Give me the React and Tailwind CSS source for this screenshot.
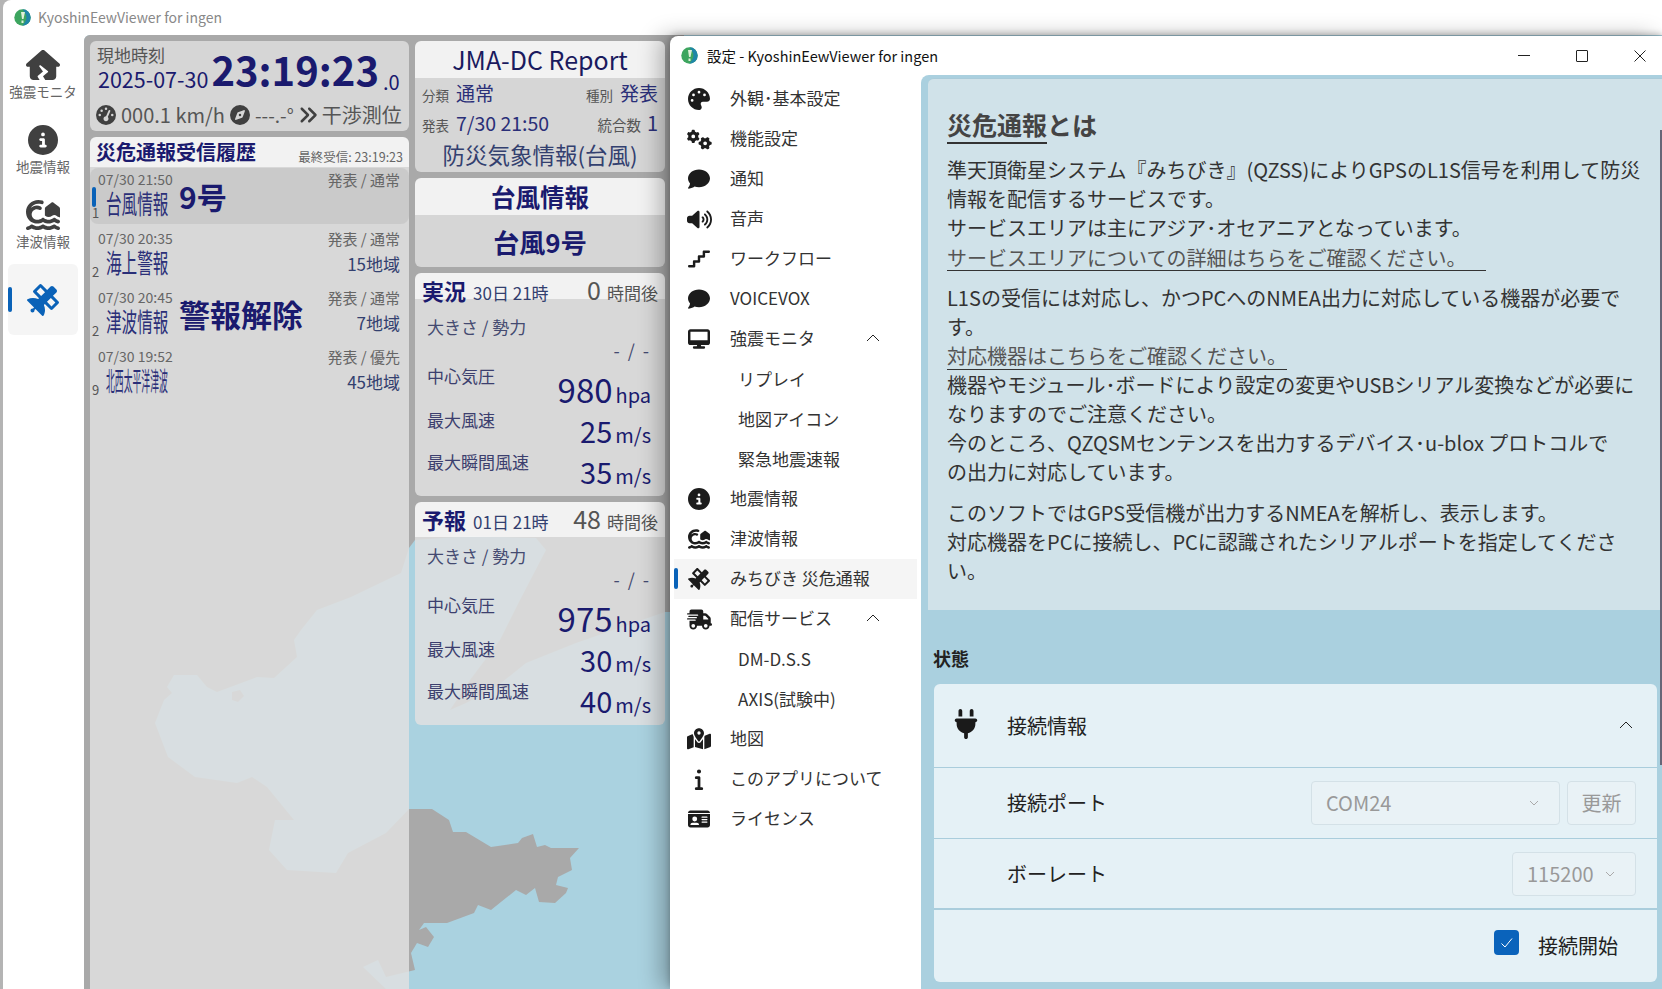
import {
  FaHouseCrack, FaCircleInfo, FaHouseTsunami, FaSatellite, FaGaugeHigh, FaCompass, FaAnglesRight,
  FaPalette, FaGears, FaComment, FaVolumeHigh, FaStairs, FaDesktop, FaTruckFast, FaMapLocationDot,
  FaInfo, FaIdCard, FaPlug,
} from "react-icons/fa6";

function Logo() {
  return (
    <svg width="17" height="17" viewBox="0 0 17 17" className="shrink-0">
      <circle cx="8.5" cy="8.5" r="8.2" fill="#3da55f" />
      <path d="M8.5 .3a8.2 8.2 0 0 1 0 16.4c2-3 5-6 3.5-11z" fill="#1f86a8" />
      <path d="M7 3h4l-1.500 7h-1.500zM7.500 11.500h2v2.500h-2z" fill="#dff0d8" />
    </svg>
  );
}

function Chevron({ className }) {
  return (
    <svg width="14" height="8" viewBox="0 0 14 8" className={className}>
      <path d="M1 7l6-6 6 6" fill="none" stroke="#222" strokeWidth="1" />
    </svg>
  );
}

function ChevronDown() {
  return (
    <svg width="10" height="6" viewBox="0 0 10 6">
      <path d="M1 1l4 4 4-4" fill="none" stroke="#aaa" strokeWidth="1" />
    </svg>
  );
}

function NavItem({ icon: Icon, label, active, size = 34 }) {
  return (
    <div className={`relative h-[71px] mb-[4px] rounded-md flex flex-col items-center ${active ? "bg-[#f5f5f5] mt-[8px] pt-[21px]" : "pt-[15px]"}`}>
      {active && <div className="absolute left-0 top-[23px] h-[25px] w-[4px] rounded-sm bg-[#0a62b8]" />}
      <div className="h-[30px] flex items-center justify-center">
        <Icon style={{ fontSize: size }} className={active ? "text-[#0a62b8]" : "text-[#404040]"} />
      </div>
      {label && <div className="text-[13.5px] leading-[20px] text-[#666] whitespace-nowrap mt-[1px]">{label}</div>}
    </div>
  );
}

function HistoryRow({ date, title, squeeze, count, big, bigSize, state, areas, active }) {
  return (
    <div className={`relative h-[56px] mb-[3px] rounded-lg flex pl-[8px] pr-[9px] pt-[1px] ${active ? "bg-[#c9c9c9]/90" : ""}`}>
      {active && <div className="absolute left-[2px] top-[19px] h-[20px] w-[4px] rounded-sm bg-[#0a62b8]" />}
      <div className="w-[82px] shrink-0">
        <div className="text-[14px] leading-[20px] text-[#666]">{date}</div>
        <div className="flex items-end h-[28px]">
          <span className="w-[13px] -ml-[6px] -mb-[3px] text-[13px] leading-[14px] text-[#555]">{count}</span>
          <span className="w-[62px] whitespace-nowrap ml-[1px] text-[26px] leading-[28px] text-[#2a2f78] origin-left inline-block" style={{ transform: `scaleX(${squeeze})` }}>
            {title}
          </span>
        </div>
      </div>
      <div className={`flex-1 -ml-[1px] self-center -mt-[1px] font-bold text-[#1a1a6e] ${bigSize}`}>{big}</div>
      <div className="text-right -mt-[1px]">
        <div className="text-[15px] leading-[24px] text-[#666] whitespace-nowrap">{state}</div>
        {areas && <div className="text-[17px] leading-[26px] text-[#33406f]">{areas}</div>}
      </div>
    </div>
  );
}

function Stat({ label, value, unit, labelMt, big }) {
  return (
    <div className="h-[41px] flex items-center justify-between pl-[12px] pr-[14px]">
      <div className={`self-start text-[17px] leading-[24px] text-[#3c3f6e] ${labelMt}`}>{label}</div>
      <div className="flex items-baseline gap-[3px] -mt-[6px] text-[#1a1a6e]">
        <span className={big ? "text-[33px] leading-[36px]" : "text-[29px] leading-[36px]"}>{value}</span>
        <span className="text-[20px] leading-[24px]">{unit}</span>
      </div>
    </div>
  );
}

function Forecast({ title, when, hours, headerH, bodyH, pressure, wind, gust }) {
  return (
    <div className="w-[250px] mt-[6px]">
      <div className={`flex items-baseline rounded-t-md bg-[#f5f5f5]/95 px-[7px] pt-[5px] ${headerH}`}>
        <span className="font-bold text-[22px] leading-[23px] text-[#1a1a6e]">{title}</span>
        <span className="ml-[7px] text-[17px] leading-[23px] text-[#33406f] whitespace-nowrap">{when}</span>
        <span className="ml-auto text-[25px] text-[#555] leading-[23px]">{hours}</span>
        <span className="ml-[6px] text-[17px] leading-[23px] text-[#555] whitespace-nowrap">時間後</span>
      </div>
      <div className={`rounded-b-md bg-[#e0e0e0]/85 ${bodyH}`}>
        <div className="pl-[12px] text-[17px] leading-[24px] text-[#444a70]">大きさ / 勢力</div>
        <div className="pr-[14px] text-right text-[18px] leading-[24px] -mt-[1px] mb-[9px] text-[#444a70] tracking-[2px]">- / -</div>
        <Stat label="中心気圧" value={pressure} unit="hpa" big labelMt="-mt-[7px]" />
        <Stat label="最大風速" value={wind} unit="m/s" labelMt="-mt-[4px]" />
        <Stat label="最大瞬間風速" value={gust} unit="m/s" labelMt="-mt-[3px]" />
      </div>
    </div>
  );
}

const menu = [
  { icon: FaPalette, label: "外観･基本設定" },
  { icon: FaGears, label: "機能設定", iconClass: "text-[25px]" },
  { icon: FaComment, label: "通知" },
  { icon: FaVolumeHigh, label: "音声", iconClass: "text-[25px]" },
  { icon: FaStairs, label: "ワークフロー" },
  { icon: FaComment, label: "VOICEVOX" },
  { icon: FaDesktop, label: "強震モニタ", open: true },
  { label: "リプレイ", sub: true },
  { label: "地図アイコン", sub: true },
  { label: "緊急地震速報", sub: true },
  { icon: FaCircleInfo, label: "地震情報" },
  { icon: FaHouseTsunami, label: "津波情報" },
  { icon: FaSatellite, label: "みちびき 災危通報", active: true },
  { icon: FaTruckFast, label: "配信サービス", open: true, iconClass: "text-[25px]" },
  { label: "DM-D.S.S", sub: true },
  { label: "AXIS(試験中)", sub: true },
  { icon: FaMapLocationDot, label: "地図", iconClass: "text-[24px]" },
  { icon: FaInfo, label: "このアプリについて" },
  { icon: FaIdCard, label: "ライセンス" },
];

export default function App() {
  return (
    <div className="relative w-[1662px] h-[989px] overflow-hidden bg-[#b4b4b4] pl-[3px] font-['Noto_Sans_CJK_JP','Noto_Sans',sans-serif]">
      {/* MAIN WINDOW */}
      <div className="h-full rounded-tl-lg bg-white flex flex-col">
        <div className="h-[35px] shrink-0 flex items-center pl-[11px] gap-[7px] text-[14px] text-[#888]">
          <Logo />
          <span>KyoshinEewViewer for ingen</span>
        </div>
        <div className="flex flex-1 min-h-0">
          {/* NAV */}
          <div className="w-[81px] shrink-0 pl-[5px] pr-[6px]">
            <NavItem icon={FaHouseCrack} label="強震モニタ" />
            <NavItem icon={FaCircleInfo} label="地震情報" size={30} />
            <NavItem icon={FaHouseTsunami} label="津波情報" />
            <NavItem icon={FaSatellite} active size={32} />
          </div>

          {/* MAP AREA */}
          <div className="relative flex-1 rounded-tl-md overflow-hidden bg-[#aad2e0] pt-[6px] pl-[6px] flex gap-[6px]">
            {/* map is drawn in page coordinates, offset by this panel */}
            <svg className="absolute left-0 top-0" width="600" height="954" viewBox="84 35 600 954">
              <path
                fill="#a9a9a9"
                d="M84 35H700V612L665 612L576 643L526 663L496 687L466 703L450 710L470 680L500 640L520 600L546 550L536 538L470 536L415 540L409 548L401 573L351 597L317 610L301 630L294 640L297 657L274 678L257 677L217 692L207 687L197 675L174 675L167 687L172 693L164 700L155 723L168 757L195 777L237 783L252 777L267 787L294 820L275 820L269 850L287 870L336 873L348 853L386 833L409 809L432 809L449 820L453 832L466 832L491 847L518 843L522 838L533 834L537 847L545 845L551 848L579 848L570 858L572 870L558 877L556 885L568 888L566 893L555 903L539 902L535 888L526 895L516 890L491 910L478 905L474 913L447 923L424 923L419 930L426 927L434 937L428 947L417 943L411 953L415 970L386 977L378 960L363 967L386 989H84Z"
              />
              <path fill="#a9a9a9" d="M232 692L240 690L244 696L238 702L232 700Z" />
            </svg>

            {/* HISTORY COLUMN */}
            <div className="relative w-[319px] shrink-0 flex flex-col">
              <div className="h-[90px] rounded-md bg-[#d6d6d6] mb-[6px] px-[7px] pt-[2px] text-[#1a1a6e]">
                <div className="flex">
                  <div>
                    <div className="text-[17px] leading-[24px] text-[#555]">現地時刻</div>
                    <div className="text-[21.5px] leading-[24px] ml-[1px] whitespace-nowrap">2025-07-30</div>
                  </div>
                  <div className="ml-[3px] mt-[1px] font-bold text-[40px] leading-[50px] whitespace-nowrap">23:19:23</div>
                  <div className="self-end ml-[4px] text-[20px] leading-[25px] whitespace-nowrap">.0</div>
                </div>
                <div className="flex items-center mt-[7px] text-[#555] whitespace-nowrap">
                  <FaGaugeHigh className="-ml-[1px] text-[20px] text-[#404040]" />
                  <span className="ml-[5px] text-[20px] leading-[28px]">000.1 km/h</span>
                  <FaCompass className="ml-[5px] text-[20px] text-[#404040]" />
                  <span className="ml-[5px] text-[19px] leading-[28px]">---.-°</span>
                  <FaAnglesRight className="ml-[4px] text-[20px] text-[#404040]" />
                  <span className="ml-[4px] text-[20px] leading-[28px]">干渉測位</span>
                </div>
              </div>
              <div className="flex-1 flex flex-col">
                <div className="h-[30px] shrink-0 rounded-t-md bg-[#f5f5f5]/95 flex items-end justify-between pl-[6px] pr-[6px]">
                  <span className="font-bold text-[20px] leading-[30px] text-[#1a1a6e]">災危通報受信履歴</span>
                  <span className="text-[12.5px] leading-[20px] text-[#666]">最終受信: 23:19:23</span>
                </div>
                <div className="flex-1 bg-[#e0e0e0]/85 pt-[1px]">
                  <HistoryRow active date="07/30 21:50" title="台風情報" squeeze={0.6} count="1" big="9号" bigSize="text-[30px]" state="発表 / 通常" />
                  <HistoryRow date="07/30 20:35" title="海上警報" squeeze={0.6} count="2" big="" bigSize="" state="発表 / 通常" areas="15地域" />
                  <HistoryRow date="07/30 20:45" title="津波情報" squeeze={0.6} count="2" big="警報解除" bigSize="text-[31px] whitespace-nowrap" state="発表 / 通常" areas="7地域" />
                  <HistoryRow date="07/30 19:52" title="北西太平洋津波" squeeze={0.34} count="9" big="" bigSize="" state="発表 / 優先" areas="45地域" />
                </div>
              </div>
            </div>

            {/* REPORT COLUMN */}
            <div className="relative w-[250px] shrink-0">
              <div className="mb-[6px]">
                <div className="h-[37px] rounded-t-md bg-[#f5f5f5]/95 text-center text-[25px] leading-[37px] text-[#1a1a5e]">JMA-DC Report</div>
                <div className="h-[94px] rounded-b-md bg-[#d6d6d6] px-[7px] text-[#2a2f78]">
                  <div className="flex items-baseline h-[29px] leading-[30px] whitespace-nowrap">
                    <span className="text-[13.5px] text-[#555]">分類</span>
                    <span className="ml-[7px] text-[19px]">通常</span>
                    <span className="ml-auto text-[13.5px] text-[#555]">種別</span>
                    <span className="ml-[7px] text-[19px]">発表</span>
                  </div>
                  <div className="flex items-baseline h-[29px] leading-[32px] whitespace-nowrap">
                    <span className="text-[13.5px] text-[#555]">発表</span>
                    <span className="ml-[7px] text-[19.5px]">7/30 21:50</span>
                    <span className="ml-auto text-[14.5px] text-[#555]">統合数</span>
                    <span className="ml-[6px] text-[20px]">1</span>
                  </div>
                  <div className="text-center text-[22.5px] leading-[36px] text-[#33406f] whitespace-nowrap">防災気象情報(台風)</div>
                </div>
              </div>
              <div>
                <div className="h-[37px] rounded-t-md bg-[#f5f5f5]/95 text-center font-bold text-[24.5px] leading-[37px] text-[#1a1a6e]">台風情報</div>
                <div className="h-[52px] rounded-b-md bg-[#d6d6d6] text-center font-bold text-[26px] leading-[54px] text-[#1a1a6e]">台風9号</div>
              </div>
              <Forecast title="実況" when="30日 21時" hours="0" headerH="h-[26px]" bodyH="h-[197px] pt-[16px]" pressure="980" wind="25" gust="35" />
              <Forecast title="予報" when="01日 21時" hours="48" headerH="h-[35px]" bodyH="h-[188px] pt-[7px]" pressure="975" wind="30" gust="40" />
            </div>
          </div>
        </div>
      </div>

      {/* SETTINGS WINDOW */}
      <div className="absolute left-[670px] top-[36px] right-0 bottom-0 rounded-tl-lg bg-white flex flex-col shadow-[-10px_0_22px_rgba(0,0,0,0.28),0_-2px_6px_rgba(0,0,0,0.25)]">
        <div className="h-[39px] shrink-0 flex items-center pl-[11px] gap-[9px] text-[14.5px] text-[#111]">
          <Logo />
          <span>設定 - KyoshinEewViewer for ingen</span>
          <div className="ml-auto -mr-[7px] flex items-center">
            <div className="w-[58px] flex justify-center">
              <div className="w-[12px] h-[1px] bg-[#222]" />
            </div>
            <div className="w-[58px] flex justify-center">
              <div className="w-[12px] h-[12px] border border-[#222] rounded-[1px]" />
            </div>
            <div className="w-[58px] flex justify-center">
              <svg width="12" height="12" viewBox="0 0 12 12">
                <path d="M.5.5l11 11M11.500.5l-11 11" stroke="#222" strokeWidth="1" />
              </svg>
            </div>
          </div>
        </div>

        <div className="flex flex-1 min-h-0">
          {/* SIDEBAR */}
          <div className="w-[251px] shrink-0 pt-[4px] px-[4px]">
            {menu.map((item) => (
              <div
                key={item.label}
                className={`relative h-[40px] flex items-center text-[17px] text-[#333] whitespace-nowrap ${item.active ? "bg-[#f5f5f5]" : ""}`}
              >
                {item.active && <div className="absolute left-0 top-[9px] h-[21px] w-[4px] rounded-sm bg-[#0a62b8]" />}
                <div className="w-[50px] shrink-0 flex justify-center">
                  {item.icon && <item.icon className={`text-[#1c1c1c] ${item.iconClass || "text-[22px]"}`} />}
                </div>
                {item.sub ? (
                  <span className="ml-[14px] -mt-[1px]">{item.label}</span>
                ) : (
                  <span className="-mt-[3px] ml-[6px]">{item.label}</span>
                )}
                {item.open && <Chevron className="absolute left-[192px] top-[15px]" />}
              </div>
            ))}
          </div>

          {/* CONTENT */}
          <div className="relative flex-1 bg-[#aad0df] rounded-tl-lg">
            <div className="ml-[7px] mt-[3px] h-[532px] rounded-tl-md bg-[#d0e2e9] border-t border-[#aacbd9] pl-[19px] pr-[10px] pt-[27px] text-[20px] leading-[29px] text-[#333] whitespace-nowrap">
              <div className="font-bold text-[25px] leading-[36px] text-[#444] mb-[13px]">
                <span className="border-b-2 border-[#333]">災危通報</span>とは
              </div>
              <div>準天頂衛星システム『みちびき』(QZSS)によりGPSのL1S信号を利用して防災</div>
              <div>情報を配信するサービスです。</div>
              <div>サービスエリアは主にアジア･オセアニアとなっています。</div>
              <div className="w-[539px] pt-[3px] leading-[25px] border-b border-[#333] text-[#555]">サービスエリアについての詳細はちらをご確認ください。</div>
              <div className="mt-[12px]">L1Sの受信には対応し、かつPCへのNMEA出力に対応している機器が必要で</div>
              <div>す。</div>
              <div className="w-[340px] pt-[2px] leading-[26px] border-b border-[#333] text-[#555]">対応機器はこちらをご確認ください。</div>
              <div>機器やモジュール･ボードにより設定の変更やUSBシリアル変換などが必要に</div>
              <div>なりますのでご注意ください。</div>
              <div>今のところ、QZQSMセンテンスを出力するデバイス･u-blox プロトコルで</div>
              <div>の出力に対応しています。</div>
              <div className="mt-[12px]">このソフトではGPS受信機が出力するNMEAを解析し、表示します。</div>
              <div>対応機器をPCに接続し、PCに認識されたシリアルポートを指定してくださ</div>
              <div>い。</div>
            </div>

            <div className="pl-[13px] pr-[5px]">
              <div className="h-[74px] pt-[34px] -ml-[1px] font-bold text-[18px] leading-[28px] text-[#222]">状態</div>
              <div className="h-[298px] rounded-md bg-[#e5f1f6] text-[20px] text-[#222]">
                <div className="relative h-[84px] flex items-center border-b border-[#aacddc] pl-[73px]">
                  <FaPlug className="absolute left-[17px] top-[25px] text-[30px] text-[#1a1a1a]" />
                  <span>接続情報</span>
                  <Chevron className="absolute right-[24px] top-[37px]" />
                </div>
                <div className="h-[71px] flex items-center border-b border-[#aacddc] pl-[73px] pr-[21px]">
                  <span>接続ポート</span>
                  <div className="ml-auto w-[249px] h-[44px] rounded border border-[#d4e1e7] bg-[#e9f2f6] flex items-center justify-between pl-[14px] pr-[20px] text-[#999]">
                    <span>COM24</span>
                    <ChevronDown />
                  </div>
                  <div className="ml-[7px] w-[69px] h-[44px] rounded border border-[#d4e1e7] bg-[#e9f2f6] flex items-center justify-center text-[#999]">更新</div>
                </div>
                <div className="h-[71px] flex items-center border-b-2 border-[#aacddc] pl-[73px] pr-[21px]">
                  <span>ボーレート</span>
                  <div className="ml-auto w-[124px] h-[44px] rounded border border-[#d4e1e7] bg-[#e9f2f6] flex items-center justify-between pl-[14px] pr-[20px] text-[#999]">
                    <span>115200</span>
                    <ChevronDown />
                  </div>
                </div>
                <div className="h-[72px] flex items-center justify-end pr-[39px]">
                  <div className="w-[25px] h-[25px] -mt-[7px] rounded bg-[#0a63bb] flex items-center justify-center">
                    <svg width="14" height="12" viewBox="0 0 14 12">
                      <path d="M1.500 6.500l3.500 3.500 7-8.500" fill="none" stroke="#fff" strokeWidth="1" />
                    </svg>
                  </div>
                  <span className="ml-[19px]">接続開始</span>
                </div>
              </div>
            </div>
            <div className="absolute right-0 top-[55px] h-[635px] w-[2px] bg-[#667]" />
          </div>
        </div>
      </div>
    </div>
  );
}
